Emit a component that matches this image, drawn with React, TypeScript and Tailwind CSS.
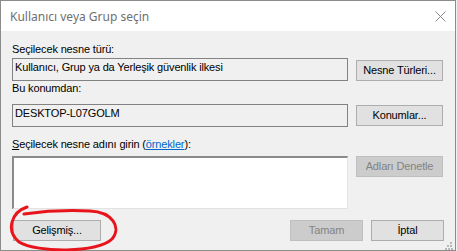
import React from 'react';

const Btn = ({ children, disabled, className = '' }: { children: React.ReactNode; disabled?: boolean; className?: string }) => (
  <div
    className={`h-[21px] flex items-center justify-center border leading-[13px] ${
      disabled ? 'bg-[#cccccc] border-[#bfbfbf] text-[#838383]' : 'bg-[#e1e1e1] border-[#adadad] text-black'
    } ${className}`}
  >
    {children}
  </div>
);

export default function App() {
  return (
    <div className="w-[457px] h-[251px] bg-[#f0f0f0] relative overflow-hidden">
      <div
        className="w-[456px] h-[251px] border border-[#8c8c8c] bg-[#f0f0f0] flex flex-col text-[11px] tracking-[-0.15px] text-black"
        style={{ fontFamily: '"Liberation Sans", Arial, sans-serif' }}
      >
        {/* title bar */}
        <div className="h-[30px] bg-white flex items-center justify-between pl-[9px] pr-[8px] shrink-0">
          <span className="text-[12px] tracking-normal text-[#6f6f6f] pt-[1px]" style={{ fontFamily: '"Noto Sans", sans-serif' }}>
            Kullanıcı veya Grup seçin
          </span>
          <svg width="11" height="11" viewBox="0 0 11 11" className="mr-[1px]">
            <path d="M0.5 0.5 L10.5 10.5 M10.5 0.5 L0.5 10.5" stroke="#8a8a8a" strokeWidth="1" />
          </svg>
        </div>

        {/* body */}
        <div className="flex-1 pt-[12px] pl-[11px] flex flex-col">
          <div className="h-[13px] leading-[13px]">Seçilecek nesne türü:</div>
          <div className="mt-[2px] flex items-start gap-[8px]">
            <div className="w-[336px] h-[23px] border border-[#828282] pt-[2px] pl-[2px] leading-[13px]">
              Kullanıcı, Grup ya da Yerleşik güvenlik ilkesi
            </div>
            <Btn className="w-[87px] mt-[2px]">Nesne Türleri...</Btn>
          </div>

          <div className="mt-[1px] h-[13px] leading-[13px]">Bu konumdan:</div>
          <div className="mt-[9px] flex items-start gap-[8px]">
            <div className="w-[336px] h-[23px] border border-[#828282] pt-[2px] pl-[2px] leading-[13px]">
              DESKTOP-L07GOLM
            </div>
            <Btn className="w-[87px] mt-[1px]">Konumlar...</Btn>
          </div>

          <div className="mt-[11px] h-[13px] leading-[13px]">
            <span className="underline">S</span>eçilecek nesne adını girin (
            <span className="text-[#0066cc] underline">örnekler</span>):
          </div>
          <div className="mt-[5px] flex items-start gap-[8px]">
            <div className="w-[336px] h-[53px] bg-white border-t-2 border-l-2 border-b border-r border-t-[#8a8a8a] border-l-[#8a8a8a] border-b-[#e3e3e3] border-r-[#e3e3e3]" />
            <Btn disabled className="w-[87px]">Adları Denetle</Btn>
          </div>

          <div className="mt-[11px] flex items-start">
            <Btn className="w-[88px] ml-[1px]">Gelişmiş...</Btn>
            <div className="flex-1" />
            <Btn disabled className="w-[73px]">Tamam</Btn>
            <Btn className="w-[73px] ml-[8px] mr-[11px]">İptal</Btn>
          </div>
        </div>
      </div>

      {/* resize grip */}
      <svg width="8" height="8" viewBox="0 0 8 8" className="absolute left-[445px] top-[242px]">
        <rect x="5" y="0" width="2" height="2" fill="#b8b8b8" />
        <rect x="2" y="3" width="2" height="2" fill="#b8b8b8" />
        <rect x="5" y="3" width="2" height="2" fill="#b8b8b8" />
        <rect x="0" y="6" width="2" height="2" fill="#b8b8b8" />
        <rect x="3" y="6" width="2" height="2" fill="#b8b8b8" />
        <rect x="6" y="6" width="2" height="2" fill="#b8b8b8" />
      </svg>

      {/* red annotation around the button */}
      <svg width="130" height="50" viewBox="0 0 130 50" className="absolute left-0 top-[203px] pointer-events-none">
        <path
          d="M27 4 C12 9, 5 27, 19 39 C37 50, 98 50, 112 36 C122 24, 112 9, 90 8 C70 7, 45 8, 24 11"
          fill="none"
          stroke="#e8141c"
          strokeWidth="3"
          strokeLinecap="round"
        />
      </svg>
    </div>
  );
}
